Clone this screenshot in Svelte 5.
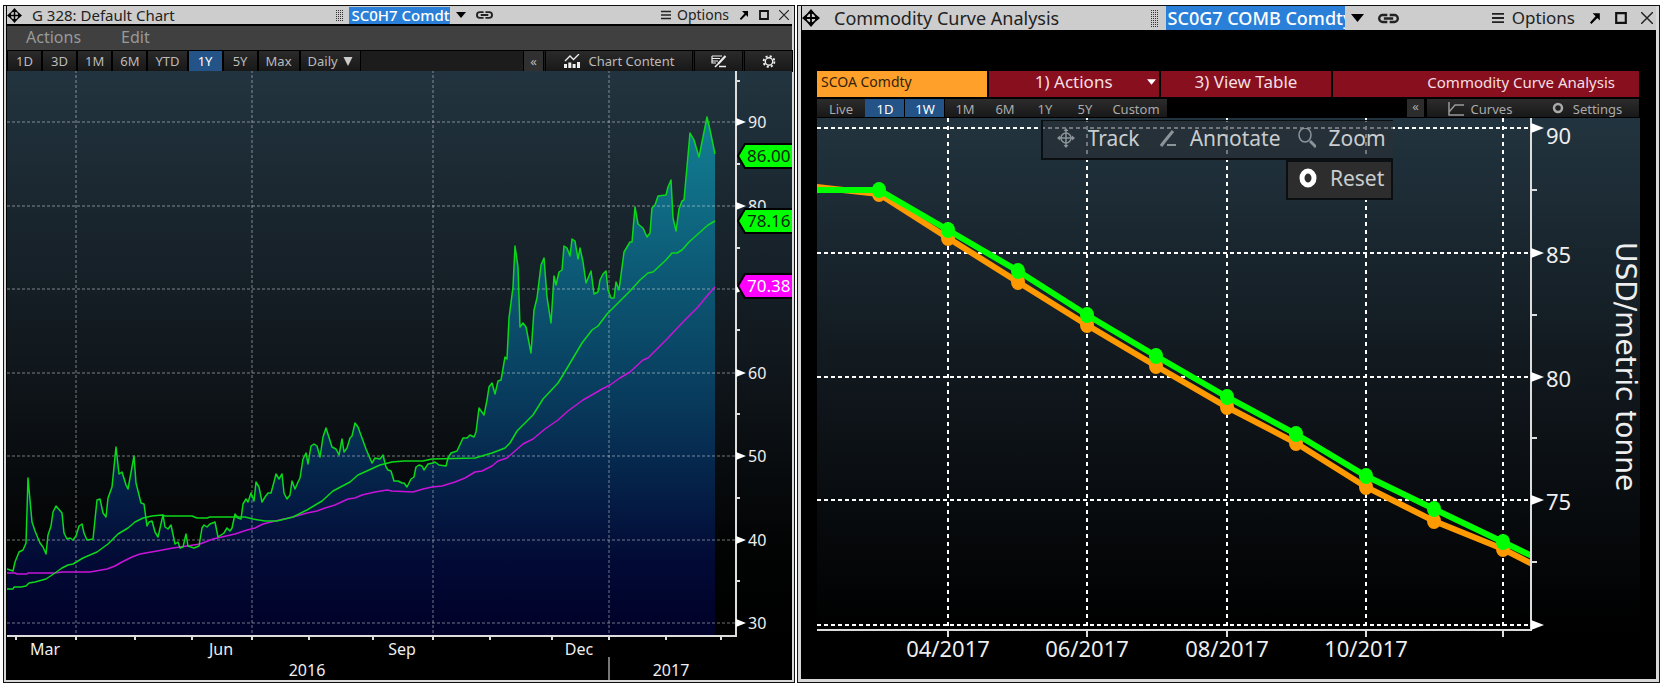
<script lang="ts">
	const ranges = ["1D", "3D", "1M", "6M", "YTD", "1Y", "5Y", "Max"];
	const curveRanges = ["Live", "1D", "1W", "1M", "6M", "1Y", "5Y", "Custom"];

	let range = $state("1Y");
	let curveRange = $state(["1D", "1W"]);

	// daily close, in plot units
	const price =
		"7,569 13,571 15,562 19,552 23,550 26,543 28,478 32,522 35,531 40,543 43,547 46,554 48,535 51,526 53,512 56,506 62,513 64,533 67,539 70,538 73,540 76,536 79,526 82,524 84,533 87,540 93,539 97,500 100,499 103,513 106,517 108,498 112,487 116,447 119,474 122,472 126,485 128,489 134,456 136,483 141,503 144,504 147,526 149,522 152,521 155,532 158,537 163,515 165,527 168,529 171,525 175,544 178,542 180,548 183,547 186,534 188,546 194,548 199,546 202,528 204,525 207,527 210,524 215,522 218,537 224,533 227,528 230,531 232,528 235,514 238,518 241,519 243,504 246,499 248,502 251,493 254,501 256,482 259,487 262,502 265,497 268,493 271,493 274,482 276,474 279,479 282,474 284,493 287,499 290,495 292,481 295,489 298,482 300,478 303,459 306,453 308,464 311,446 314,444 317,446 320,457 323,437 326,428 332,447 336,449 339,455 342,439 344,452 347,448 350,438 352,436 355,423 358,427 366,449 372,463 375,458 380,459 383,455 386,467 388,470 391,471 394,481 398,481 402,483 404,483 407,487 411,479 414,477 416,467 419,465 422,466 424,470 428,464 433,463 435,462 439,465 446,466 448,458 451,453 457,451 463,438 467,438 470,435 474,437 476,432 479,408 484,415 487,400 489,387 492,383 495,394 498,381 501,380 505,357 507,359 509,318 513,287 515,246 518,267 520,327 523,323 526,327 531,353 534,310 537,298 541,265 544,258 547,297 551,323 554,276 556,285 559,272 562,270 564,246 567,248 570,256 572,239 575,241 578,259 580,248 583,262 586,283 591,271 594,294 598,292 600,280 603,274 606,271 608,290 611,298 614,298 616,282 619,290 624,252 630,242 632,242 635,207 638,224 643,228 647,237 650,233 652,208 655,205 658,196 666,195 668,187 671,180 673,218 676,231 679,209 682,201 684,200 690,133 694,140 699,157 707,117 710,130 715,154";
	const fastAverage =
		"7,589 13,589 14,587 21,587 26,586 29,583 35,582 46,579 55,573 62,568 68,565 73,564 83,558 97,552 108,544 118,534 128,528 135,522 143,518 152,516 162,515 165,516 192,516 197,518 207,518 210,517 245,517 253,519 265,521 277,521 293,517 307,510 322,501 333,491 350,482 358,475 380,465 392,462 404,461 423,461 432,459 475,458 492,453 505,448 510,443 517,431 533,415 543,399 558,383 563,375 582,343 592,330 598,326 607,314 630,291 640,280 648,273 653,272 666,260 672,253 677,253 682,250 689,242 698,234 708,225 715,221";
	const slowAverage =
		"7,573 15,573 17,574 27,574 28,573 55,573 62,572 90,572 107,569 115,566 122,562 132,557 140,554 157,551 173,548 187,546 200,544 213,539 235,534 247,530 255,528 263,524 275,521 293,517 307,513 317,511 325,508 335,505 348,499 355,498 362,495 375,492 387,490 392,491 413,492 423,489 432,487 442,486 455,482 465,478 475,472 482,471 492,466 498,461 507,458 523,444 533,439 545,429 558,420 568,411 583,400 597,392 602,389 610,385 620,378 630,372 643,360 648,358 667,339 683,322 690,315 698,307 707,296 715,287";

	const levels = [
		{ y: 122, label: "90" },
		{ y: 206, label: "80" },
		{ y: 289, label: "" },
		{ y: 373, label: "60" },
		{ y: 456, label: "50" },
		{ y: 540, label: "40" },
		{ y: 623, label: "30" },
	];
	const halfLevels = [81, 164, 248, 330, 414, 498, 581];
	const quarters = [76, 252, 433, 609];
	const monthTicks = [16, 76, 135, 192, 252, 309, 373, 433, 490, 552, 609, 666, 721];
	const months = [
		{ x: 45, label: "Mar" },
		{ x: 221, label: "Jun" },
		{ x: 402, label: "Sep" },
		{ x: 579, label: "Dec" },
	];
	const tags = [
		{ y: 156, label: "86.00", kind: "green" },
		{ y: 221, label: "78.16", kind: "green" },
		{ y: 286, label: "70.38", kind: "magenta" },
	];

	const curveLevels = [
		{ y: 128, label: "90", base: 144 },
		{ y: 253, label: "85", base: 263 },
		{ y: 377, label: "80", base: 387 },
		{ y: 500, label: "75", base: 510 },
		{ y: 625, label: "", base: 0 },
	];
	const curveHalfLevels = [190, 315, 438, 562];
	const expiries = [
		{ x: 948, label: "04/2017" },
		{ x: 1087, label: "06/2017" },
		{ x: 1227, label: "08/2017" },
		{ x: 1366, label: "10/2017" },
		{ x: 1503, label: "" },
	];
	const today = [
		[879, 190], [948, 230], [1018, 271], [1087, 315], [1156, 356], [1227, 397],
		[1296, 434], [1366, 476], [1434, 509], [1503, 542],
	];
	const lastWeek = [
		[879, 194], [948, 238], [1018, 282], [1087, 325], [1156, 366], [1227, 407],
		[1296, 443], [1366, 487], [1434, 521], [1503, 549],
	];

	function toggleCurve(name: string) {
		curveRange = curveRange.includes(name)
			? curveRange.filter((n) => n !== name)
			: [...curveRange, name];
	}
</script>

{#snippet titleBar(title: string, symbol: string)}
	<header class="title-bar">
		<div class="title">
			<svg class="move" viewBox="0 0 16 16" aria-hidden="true">
				<path d="M8 0l3.400 4H4.600zM8 16l3.400-4H4.600zM0 8l4-3.400v6.800zM16 8l-4-3.400v6.800z" />
				<circle cx="8" cy="8" r="4.600" fill="none" stroke="#000" stroke-width="1.400" />
				<path d="M7.200 3h1.600v10H7.200zM3 7.200h10v1.600H3z" />
			</svg>
			<h1>{title}</h1>
		</div>
		<div class="symbol">
			<span class="grip"></span>
			<input type="text" value={symbol} aria-label="Security" />
			<button aria-label="Recent securities">
				<svg class="caret" viewBox="0 0 10 6"><path d="M0 0h10L5 6z" /></svg>
			</button>
			<button aria-label="Link">
				<svg class="link" viewBox="0 0 18 8" fill="none" stroke="#222" stroke-width="2">
					<path d="M8 1H4a3 3 0 0 0 0 6h4M10 1h4a3 3 0 0 1 0 6h-4M5 4h8" />
				</svg>
			</button>
		</div>
		<div class="window-actions">
			<button class="options">
				<svg viewBox="0 0 10 10" stroke="#222" stroke-width="1.500">
					<path d="M0 1.500h10M0 5h10M0 8.500h10" />
				</svg>
				Options
			</button>
			<button aria-label="Pop out">
				<svg viewBox="0 0 10 10"><path d="M3 1h6v6L7 5 2 10 .8 8.800 5.500 3.500z" /></svg>
			</button>
			<button aria-label="Maximize">
				<svg viewBox="0 0 10 10" fill="none" stroke="#111" stroke-width="1.800">
					<path d="M1 1h8v8H1z" />
				</svg>
			</button>
			<button aria-label="Close">
				<svg viewBox="0 0 10 10" stroke="#222" stroke-width="1.200"><path d="M0 0l10 10M10 0L0 10" /></svg>
			</button>
		</div>
	</header>
{/snippet}

<main class="desk">
	<section class="window price-window">
		{@render titleBar("G 328: Default Chart", "SC0H7 Comdty")}
		<nav class="menu">
			<button>Actions</button>
			<button>Edit</button>
		</nav>
		<div class="toolbar">
			{#each ranges as r}
				<button class:active={range === r} onclick={() => (range = r)}>{r}</button>
			{/each}
			<label class="period">
				<select aria-label="Period">
					<option>Daily</option>
					<option>Weekly</option>
					<option>Monthly</option>
				</select>
				<svg viewBox="0 0 10 10" fill="#ccc" aria-hidden="true"><path d="M0 0h10L5 10z" /></svg>
			</label>
			<div class="tools">
				<button class="collapse">«</button>
				<button class="content">
					<svg viewBox="0 0 16 14" fill="#eee">
						<path d="M0 10h3v4H0zM4.300 8.500h3V14h-3zM8.600 10h3v4h-3zM13 8h3v6h-3z" />
						<path d="M1 7l5-5 3.500 3.500L15 0" fill="none" stroke="#eee" stroke-width="1.300" />
					</svg>
					Chart Content
				</button>
				<button class="tool" aria-label="Annotate">
					<svg viewBox="0 0 16 13" fill="none" stroke="#eee" stroke-width="1.200">
						<path d="M1 1h10M1 3.500h8M1 6h6M1 1v7h4" />
						<path d="M14.500 1L7 9" stroke-width="2.200" />
						<path d="M7 9l-3 3M8 11.500h7" stroke-width="1.600" />
					</svg>
				</button>
				<button class="tool" aria-label="Settings">
					<svg viewBox="0 0 14 14" fill="none" stroke="#eee">
						<circle cx="7" cy="7" r="4" stroke-width="1.500" />
						<circle cx="7" cy="7" r="5.800" stroke-width="2" stroke-dasharray="2.280 2.280" />
					</svg>
				</button>
			</div>
		</div>
		<svg class="chart" viewBox="7 71 785 609" role="img" aria-label="SC0H7 price history">
			<defs>
				<linearGradient id="price-back" x1="0" y1="70" x2="0" y2="635" gradientUnits="userSpaceOnUse">
					<stop offset="0" stop-color="#22343f" />
					<stop offset="0.500" stop-color="#11181e" />
					<stop offset="0.850" stop-color="#020303" />
					<stop offset="1" stop-color="#000" />
				</linearGradient>
				<linearGradient id="price-fill" x1="0" y1="117" x2="0" y2="635" gradientUnits="userSpaceOnUse">
					<stop offset="0" stop-color="#128094" />
					<stop offset="0.550" stop-color="#083a5c" />
					<stop offset="0.850" stop-color="#020b36" />
					<stop offset="1" stop-color="#000028" />
				</linearGradient>
			</defs>
			<rect x="7" y="70" width="786" height="566" fill="url(#price-back)" />
			<rect x="7" y="636" width="786" height="44" />
			<polygon points="7,635 {price} 715,635" fill="url(#price-fill)" />
			<g class="grid">
				{#each levels as l}
					<line x1="7" x2="735" y1={l.y} y2={l.y} />
				{/each}
				{#each quarters as x}
					<line x1={x} x2={x} y1="70" y2="635" />
				{/each}
			</g>
			<polyline class="series slow" points={slowAverage} />
			<polyline class="series" points={fastAverage} />
			<polyline class="series" points={price} />
			<g class="axis">
				<path d="M736 70v566M7 636h730" />
				{#each monthTicks as x}
					<path d="M{x} 636v4" />
				{/each}
				{#each halfLevels as y}
					<path d="M736 {y}h4" />
				{/each}
			</g>
			{#each levels as l}
				<path d="M736 {l.y - 4}l10 4-10 4z" fill="#fff" />
				<text class="tick" x="748" y={l.y + 6}>{l.label}</text>
			{/each}
			{#each months as m}
				<text class="tick centered" x={m.x} y="655">{m.label}</text>
			{/each}
			<line x1="609" x2="609" y1="657" y2="680" stroke="#777" stroke-width="2" />
			<text class="tick centered" x="307" y="676">2016</text>
			<text class="tick centered" x="671" y="676">2017</text>
			{#each tags as t}
				<path class="tag {t.kind}" d="M738 {t.y}l7-12h50v24h-50z" />
				<text class="tag-text {t.kind}" x="747" y={t.y + 6}>{t.label}</text>
			{/each}
		</svg>
	</section>

	<section class="window curve-window">
		{@render titleBar("Commodity Curve Analysis", "SC0G7 COMB Comdty")}
		<div class="command-bar">
			<input type="text" value="SCOA Comdty" aria-label="Curve" />
			<button>
				1) Actions
				<svg viewBox="0 0 10 6" fill="#fff" aria-hidden="true"><path d="M0 0h10L5 6z" /></svg>
			</button>
			<button>3) View Table</button>
			<h2>Commodity Curve Analysis</h2>
		</div>
		<div class="curve-toolbar">
			{#each curveRanges as r}
				<button class:active={curveRange.includes(r)} onclick={() => toggleCurve(r)}>{r}</button>
			{/each}
			<div class="tools">
				<button class="collapse">«</button>
				<button class="wide">
					<svg viewBox="0 0 16 14" fill="none" stroke="#999" stroke-width="1.500">
						<path d="M1 0v13h15M1 10l6-7h9" />
					</svg>
					Curves
				</button>
				<button class="wide">
					<svg viewBox="0 0 16 14" fill="none" stroke="#aaa">
						<circle cx="8" cy="6" r="4" stroke-width="2.500" />
					</svg>
					Settings
				</button>
			</div>
		</div>
		<div class="curve-plot">
			<svg class="chart" viewBox="802 118 854 561" role="img" aria-label="Futures curve, USD/metric tonne">
				<defs>
					<linearGradient id="curve-back" x1="0" y1="0" x2="0" y2="1">
						<stop offset="0" stop-color="#22343f" />
						<stop offset="0.500" stop-color="#11181e" />
						<stop offset="1" stop-color="#000" />
					</linearGradient>
					<clipPath id="curve-clip"><rect x="817" y="118" width="713" height="512" /></clipPath>
				</defs>
				<rect x="817" y="118" width="823" height="512" fill="url(#curve-back)" />
				<g class="curve-grid">
					{#each curveLevels as l}
						<line class="across" x1="817" x2="1530" y1={l.y} y2={l.y} />
					{/each}
					{#each expiries as e}
						<line class="down" x1={e.x} x2={e.x} y1="118" y2="630" />
					{/each}
				</g>
				<g clip-path="url(#curve-clip)">
					<polyline class="curve week" points="816,187 {lastWeek.join(' ')} 1532,564" />
					{#each lastWeek as [x, y]}
						<ellipse class="week" cx={x} cy={y} rx="7" ry="8" />
					{/each}
					<polyline class="curve day" points="816,190 {today.join(' ')} 1532,556" />
					{#each today as [x, y]}
						<ellipse class="day" cx={x} cy={y} rx="7" ry="8" />
					{/each}
				</g>
				<g class="axis">
					<path d="M1531 118v512M817 630h715" />
					{#each curveHalfLevels as y}
						<path d="M1531 {y}h6" />
					{/each}
					{#each expiries as e}
						<path d="M{e.x} 630v7" />
					{/each}
				</g>
				{#each curveLevels as l}
					<path d="M1531 {l.y - 5}l13 5-13 5z" fill="#fff" />
					<text class="curve-tick" x="1546" y={l.base}>{l.label}</text>
				{/each}
				{#each expiries as e}
					<text class="curve-tick centered" x={e.x} y="657">{e.label}</text>
				{/each}
				<text class="unit" transform="translate(1616 242) rotate(90)">USD/metric tonne</text>
			</svg>
			<div class="overlay">
				<button>
					<svg viewBox="0 0 18 20" fill="none" stroke="#8c9499" stroke-width="1.500">
						<circle cx="9" cy="10" r="5" />
						<path d="M9 1v18M1 10h16" />
						<path d="M6.500 3L9 0l2.500 3zM6.500 17L9 20l2.500-3zM3 7.500L0 10l3 2.500zM15 7.500l3 2.500-3 2.500z" fill="#8c9499" stroke="none" />
					</svg>
					Track
				</button>
				<button>
					<svg viewBox="0 0 18 20" fill="none" stroke="#8c9499" stroke-width="3">
						<path d="M14 3L5 14l-3 4" />
						<path d="M8 17h9" stroke-width="2" />
					</svg>
					Annotate
				</button>
				<button>
					<svg viewBox="0 0 18 20" fill="none" stroke="#8c9499" stroke-width="1.500">
						<ellipse cx="7" cy="7" rx="6" ry="7" />
						<path d="M12 13l6 6" stroke-width="3" />
					</svg>
					Zoom
				</button>
				<button class="reset">
					<svg viewBox="0 0 18 20" fill="none" stroke="#fff" stroke-width="5">
						<ellipse cx="9" cy="10" rx="6" ry="7" />
					</svg>
					Reset
				</button>
			</div>
		</div>
	</section>
</main>

<style>
	:global(body) {
		background: #fff;
	}

	.desk {
		display: grid;
		grid-template-columns: 792fr 863fr;
		align-items: start;
		gap: 2px;
		padding: 5px 2px 0 3px;
		font-family: "Noto Sans", "Open Sans", sans-serif;
		font-size: 13px;
	}

	button,
	input,
	select {
		font: inherit;
		color: inherit;
		margin: 0;
		padding: 0;
		border: 0;
		border-radius: 0;
		background: none;
	}

	button {
		display: flex;
		align-items: center;
		justify-content: center;
		white-space: nowrap;
	}

	.window {
		min-width: 0;
		background: #000;
		border: 3px solid #d8d8d8;
		border-top-width: 1px;
		outline: 1px solid #111;
		outline-offset: -1px;
		padding-left: 1px;
		box-sizing: border-box;
	}

	.curve-window {
		border-width: 1px 4px 4px;
	}

	.title-bar {
		display: grid;
		grid-template-columns: 330fr auto 299fr;
		align-items: center;
		height: 18px;
		background: #cdcdcd;
		color: #222;
		font-size: 14px;
		line-height: 18px;
		border-bottom: 2px solid #000;
	}

	.title,
	.symbol,
	.window-actions {
		display: flex;
		align-items: center;
		min-width: 0;
	}

	.title {
		gap: 10px;
	}

	.title h1 {
		margin: 0;
		font-size: 15px;
		font-weight: 400;
		white-space: nowrap;
	}

	.move {
		width: 15px;
		height: 15px;
	}

	.grip {
		width: 8px;
		height: 13px;
		margin-right: 5px;
		background: repeating-linear-gradient(#cdcdcd 0 1px, transparent 1px 2px),
			repeating-linear-gradient(90deg, #333 0 1px, #cdcdcd 1px 2px);
	}

	.symbol input {
		width: 101px;
		height: 17px;
		background: #2a80d8;
		color: #fff;
		font-size: 15px;
		font-weight: 500;
		padding-left: 2px;
		box-sizing: border-box;
	}

	.caret {
		width: 10px;
		height: 6px;
		margin-left: 6px;
	}

	.link {
		width: 17px;
		height: 8px;
		margin-left: 10px;
	}

	.window-actions {
		justify-content: flex-end;
		gap: 10px;
		padding-right: 3px;
	}

	.window-actions svg {
		width: 10px;
		height: 10px;
	}

	.options {
		gap: 6px;
	}

	.curve-window .title-bar {
		grid-template-columns: 348fr auto 257fr;
		height: 24px;
		font-size: 17px;
		line-height: 24px;
		border-bottom: 0;
	}

	.curve-window .title {
		gap: 14px;
	}

	.curve-window .title h1 {
		font-size: 18px;
	}

	.curve-window .move {
		width: 18px;
		height: 20px;
	}

	.curve-window .grip {
		height: 18px;
		margin-right: 7px;
	}

	.curve-window .symbol input {
		width: 179px;
		height: 24px;
		font-size: 18px;
	}

	.curve-window .caret {
		width: 13px;
		height: 8px;
	}

	.curve-window .link {
		width: 21px;
		height: 11px;
		margin-left: 14px;
	}

	.curve-window .window-actions {
		gap: 14px;
	}

	.curve-window .window-actions svg {
		width: 12px;
		height: 12px;
	}

	.curve-window .options {
		gap: 8px;
	}

	.menu {
		display: flex;
		gap: 40px;
		height: 24px;
		padding-left: 19px;
		background: #404040;
		color: #999;
		font-size: 16px;
	}

	.menu button {
		padding-bottom: 2px;
	}

	.toolbar {
		display: flex;
		gap: 2px;
		height: 21px;
		background: #1c1c1c;
		color: #bbb;
		font-size: 13px;
		border-top: 1px solid #000;
		padding-left: 1px;
		box-sizing: border-box;
	}

	.toolbar button,
	.period {
		min-width: 33px;
		background: linear-gradient(#2a2a2a, #181818);
		padding: 0 7px;
		box-shadow: 0 0 0 1px #000;
		box-sizing: border-box;
	}

	.toolbar .active,
	.curve-toolbar .active {
		background: #235387;
		color: #fff;
	}

	.period {
		display: flex;
		align-items: center;
		gap: 5px;
	}

	.period select {
		appearance: none;
		field-sizing: content;
	}

	.period svg {
		width: 10px;
		height: 9px;
	}

	.tools {
		display: flex;
		gap: 3px;
		margin-left: auto;
	}

	.toolbar .collapse {
		min-width: 19px;
		padding: 0 6px;
		background: #303030;
	}

	.toolbar .content {
		gap: 9px;
		width: 146px;
	}

	.content svg {
		width: 16px;
		height: 14px;
	}

	.toolbar .tool {
		width: 47px;
	}

	.tool svg {
		width: 16px;
		height: 13px;
	}

	.chart {
		display: block;
		width: 100%;
		height: auto;
	}

	.grid line {
		stroke: #fff;
		stroke-opacity: 0.45;
		stroke-dasharray: 3 2;
	}

	.series {
		fill: none;
		stroke: #0bd81a;
		stroke-width: 1.5px;
		stroke-linejoin: round;
	}

	.slow {
		stroke: #c814d8;
	}

	.axis {
		fill: none;
		stroke: #ddd;
		stroke-width: 2px;
	}

	.tick {
		fill: #eee;
		font-size: 16px;
	}

	.centered {
		text-anchor: middle;
	}

	.tag {
		fill: #0f0;
		stroke: #000;
		stroke-width: 2px;
	}

	.tag.magenta {
		fill: #f0f;
	}

	.tag-text {
		fill: #062a06;
		font-size: 17px;
	}

	.tag-text.magenta {
		fill: #fff;
	}

	.command-bar {
		display: grid;
		grid-template-columns: 170fr 170fr 171fr 306fr;
		gap: 2px;
		height: 26px;
		margin: 41px 17px 0 15px;
		color: #f3dfe2;
		font-size: 17px;
		line-height: 22px;
	}

	.command-bar input {
		min-width: 0;
		padding: 0 4px 4px;
		background: #ffa02b;
		color: #33230c;
		font-size: 14px;
	}

	.command-bar button,
	.command-bar h2 {
		position: relative;
		background: #870f1e;
		padding-bottom: 4px;
	}

	.command-bar button svg {
		position: absolute;
		right: 3px;
		width: 9px;
		height: 6px;
	}

	.command-bar h2 {
		margin: 0;
		padding-right: 24px;
		font-size: 15px;
		font-weight: 400;
		text-align: right;
		white-space: nowrap;
	}

	.curve-toolbar {
		display: flex;
		height: 18px;
		margin: 2px 17px 1px 15px;
		color: #aaa;
		font-size: 13px;
	}

	.curve-toolbar button {
		width: 40px;
		padding-top: 2px;
		line-height: 16px;
		background: linear-gradient(#2c2c2c, #181818);
	}

	.curve-toolbar > button:first-child {
		width: 48px;
	}

	.curve-toolbar > button:nth-child(8) {
		width: 62px;
	}

	.curve-toolbar .active {
		box-shadow: inset -1px 0 #000;
	}

	.curve-toolbar .collapse {
		width: 17px;
		padding: 0 0 4px;
		background: #2c2c2c;
	}

	.curve-toolbar .tools .wide {
		gap: 7px;
		width: 106px;
	}

	.curve-toolbar .tools .wide + .wide {
		margin-left: -3px;
	}

	.wide svg {
		width: 16px;
		height: 14px;
	}

	.curve-plot {
		position: relative;
	}

	.curve-grid line {
		stroke: #fff;
		stroke-width: 2px;
	}

	.across {
		stroke-dasharray: 4 3;
	}

	.down {
		stroke-dasharray: 4 4;
	}

	.curve {
		fill: none;
		stroke-width: 6px;
	}

	ellipse.day {
		fill: #0f0;
	}

	ellipse.week {
		fill: #f90;
	}

	.curve.day {
		stroke: #0f0;
	}

	.curve.week {
		stroke: #f90;
	}

	.curve-tick {
		fill: #eee;
		font-size: 22px;
	}

	.unit {
		fill: #eee;
		font-family: "DejaVu Sans", sans-serif;
		font-size: 28px;
	}

	/* chart tools float over the plot */
	.overlay {
		position: absolute;
		top: 2px;
		left: 28%;
		display: grid;
		grid-template-columns: 108px 137px 107px;
		color: #c9cdcf;
		font-size: 21px;
		line-height: 24px;
	}

	.overlay button {
		height: 40px;
		gap: 13px;
		padding: 0 0 4px 4px;
		background: rgba(42, 48, 54, 0.65);
		border-top: 1px solid #0c0f12;
		border-bottom: 2px solid #0c0f12;
		box-sizing: border-box;
	}

	.overlay button:first-child {
		border-left: 2px solid #0c0f12;
	}

	.overlay svg {
		width: 18px;
		height: 20px;
	}

	.overlay .reset {
		grid-column: 3;
		background: #2d2d2d;
		border: 2px solid #0c0f12;
	}
</style>
